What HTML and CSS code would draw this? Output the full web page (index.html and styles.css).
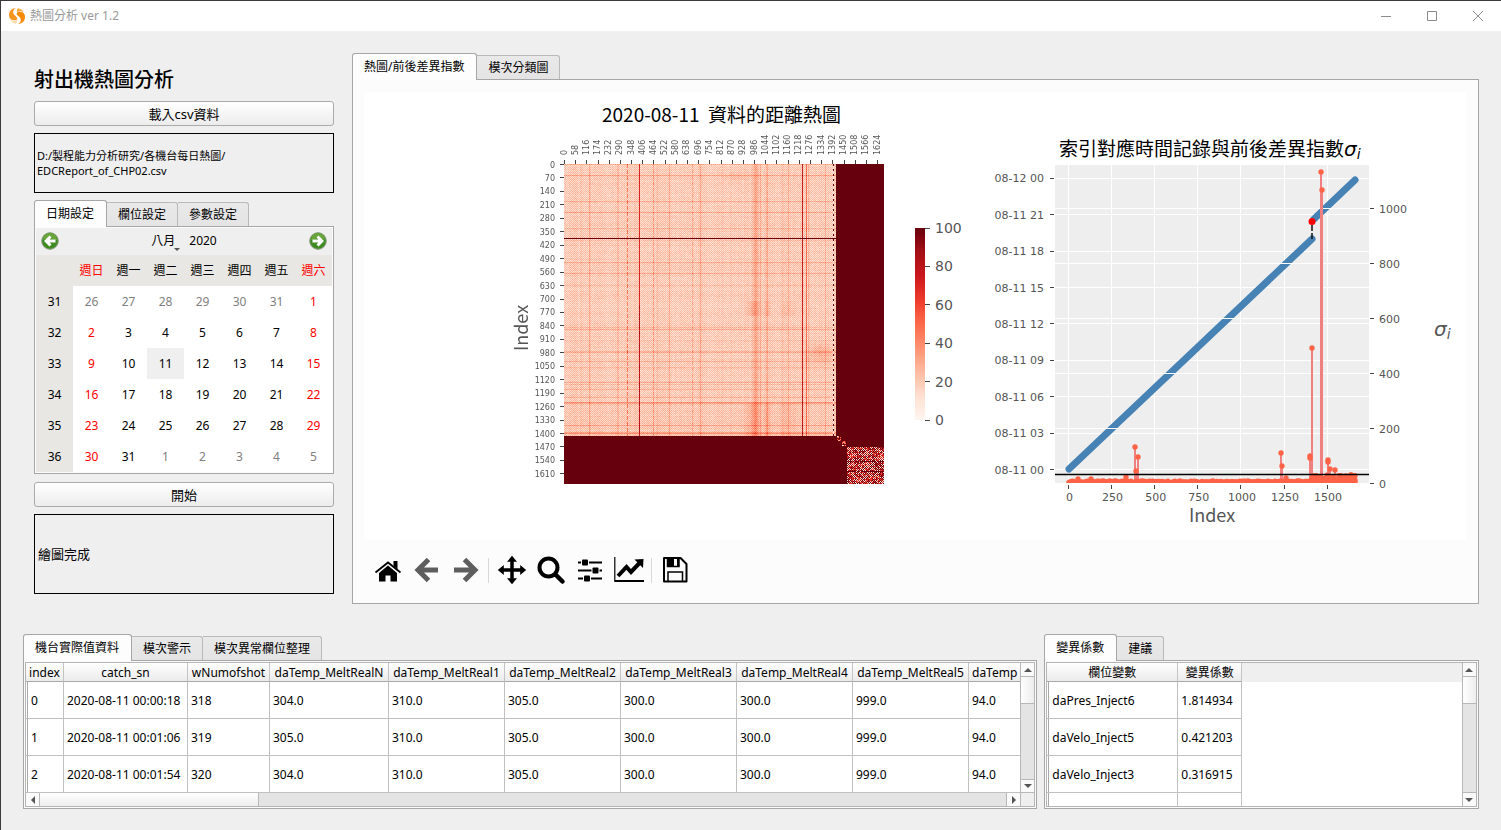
FILE: index.html
```html
<!DOCTYPE html>
<html lang="zh-Hant">
<head>
<meta charset="utf-8">
<meta name="viewport" content="width=device-width, initial-scale=1">
<title>熱圖分析 ver 1.2</title>
<link rel="stylesheet" href="styles.css">
</head>
<body>
<header class="titlebar">
  <svg class="logo" viewBox="0 0 18 18" aria-hidden="true">
    <path d="M8 1C4 1 1 4 1 8c0 1.500.6 3 1.600 4.200C5 13.500 8.500 13.600 9.300 11.900 10 9.800 5.500 8.500 5.200 5.500 5 3.500 6.200 1.900 8 1z" fill="#f7941e"/>
    <path d="M10 17c4 0 7-3 7-7 0-1.500-.6-3-1.600-4.200C13 4.500 9.500 4.400 8.700 6.200 8 8.200 12.500 9.500 12.800 12.500 13 14.500 11.800 16.100 10 17z" fill="#f58a07"/>
    <path d="M10 1.200c2.400.2 4.600 1.700 5.700 3.700-2-1-4.700-.8-6.500.2C8.400 3.800 8.800 2.200 10 1.200z" fill="#f9ab40"/>
    <path d="M8 16.800c-2.400-.2-4.600-1.700-5.700-3.700 2 1 4.700.9 6.500 0C9.600 14.200 9.200 15.800 8 16.800z" fill="#fcdcae"/>
  </svg>
  <span class="titlebar-text">熱圖分析 ver 1.2</span>
  <div class="window-buttons">
    <button type="button" aria-label="最小化"><svg viewBox="0 0 12 12"><path d="M1 6.500h10"/></svg></button>
    <button type="button" aria-label="最大化"><svg viewBox="0 0 12 12"><path d="M1.500 1.500h9v9h-9z"/></svg></button>
    <button type="button" aria-label="關閉"><svg viewBox="0 0 12 12"><path d="M1 1l10 10M11 1L1 11"/></svg></button>
  </div>
</header>

<main class="workspace">
  <div class="upper">
    <section class="controls">
      <h1>射出機熱圖分析</h1>
      <button type="button" class="push">載入csv資料</button>
      <p class="readout path">D:/製程能力分析研究/各機台每日熱圖/<br>EDCReport_of_CHP02.csv</p>
      <div class="tabbox">
        <div class="tabs" role="tablist">
          <button type="button" role="tab" class="tab on" aria-selected="true">日期設定</button>
          <button type="button" role="tab" class="tab">欄位設定</button>
          <button type="button" role="tab" class="tab">參數設定</button>
        </div>
        <div class="pane tight">
          <div class="cal-nav">
            <button type="button" aria-label="上個月"><svg viewBox="0 0 18 18"><circle cx="9" cy="9" r="8.300" fill="#3f8a22" stroke="#8a9a80"/><path d="M2 8a7 7 0 0 1 14 0Q9 5 2 8z" fill="#68a63c"/><path d="M3 9l5.500-5.500 2 2-1.900 1.900H14.500v3.200H8.600l1.900 1.900-2 2z" fill="#fff"/></svg></button>
            <span class="cal-title"><button type="button" class="month">八月</button><button type="button">2020</button></span>
            <button type="button" aria-label="下個月"><svg viewBox="0 0 18 18"><circle cx="9" cy="9" r="8.300" fill="#3f8a22" stroke="#8a9a80"/><path d="M2 8a7 7 0 0 1 14 0Q9 5 2 8z" fill="#68a63c"/><path d="M15 9L9.500 3.500l-2 2 1.900 1.900H3.500v3.200h5.900l-1.900 1.900 2 2z" fill="#fff"/></svg></button>
          </div>
          <table class="calendar">
            <thead><tr><th></th><th class="red">週日</th><th>週一</th><th>週二</th><th>週三</th><th>週四</th><th>週五</th><th class="red">週六</th></tr></thead>
            <tbody>
              <tr><th>31</th><td class="dim">26</td><td class="dim">27</td><td class="dim">28</td><td class="dim">29</td><td class="dim">30</td><td class="dim">31</td><td class="red">1</td></tr>
              <tr><th>32</th><td class="red">2</td><td>3</td><td>4</td><td>5</td><td>6</td><td>7</td><td class="red">8</td></tr>
              <tr><th>33</th><td class="red">9</td><td>10</td><td class="picked">11</td><td>12</td><td>13</td><td>14</td><td class="red">15</td></tr>
              <tr><th>34</th><td class="red">16</td><td>17</td><td>18</td><td>19</td><td>20</td><td>21</td><td class="red">22</td></tr>
              <tr><th>35</th><td class="red">23</td><td>24</td><td>25</td><td>26</td><td>27</td><td>28</td><td class="red">29</td></tr>
              <tr><th>36</th><td class="red">30</td><td>31</td><td class="dim">1</td><td class="dim">2</td><td class="dim">3</td><td class="dim">4</td><td class="dim">5</td></tr>
            </tbody>
          </table>
        </div>
      </div>
      <button type="button" class="push">開始</button>
      <p class="readout status">繪圖完成</p>
    </section>

    <section class="tabbox">
      <div class="tabs" role="tablist">
        <button type="button" role="tab" class="tab on" aria-selected="true">熱圖/前後差異指數</button>
        <button type="button" role="tab" class="tab">模次分類圖</button>
      </div>
      <div class="pane plot-pane">
        <svg class="figure" viewBox="364 92 1102 448" role="img" aria-label="距離熱圖與差異指數">
          <defs>
            <linearGradient id="reds" x1="0" y1="1" x2="0" y2="0">
              <stop offset="0" stop-color="#fff5f0"/><stop offset=".125" stop-color="#fee0d2"/><stop offset=".25" stop-color="#fcbba1"/><stop offset=".375" stop-color="#fc9272"/><stop offset=".5" stop-color="#fb6a4a"/><stop offset=".625" stop-color="#ef3b2c"/><stop offset=".75" stop-color="#cb181d"/><stop offset=".875" stop-color="#a50f15"/><stop offset="1" stop-color="#67000d"/>
            </linearGradient>
            <clipPath id="axes"><rect x="1055" y="165" width="314" height="318"/></clipPath>
          </defs>
          <text class="chart-title" x="602" y="122">2020-08-11  資料的距離熱圖</text>
          <foreignObject x="564" y="164" width="320" height="320"><canvas id="heat" width="320" height="320"></canvas></foreignObject>
          <g id="heat-ticks" class="tick-small"></g>
          <text class="axis-name" text-anchor="middle" transform="translate(528 328) rotate(-90)">Index</text>
          <rect x="915" y="228" width="10" height="192" fill="url(#reds)"/>
          <g id="bar-ticks" class="tick-large"></g>

          <text class="chart-title" x="1059" y="156">索引對應時間記錄與前後差異指數<tspan class="sigma big">σ</tspan><tspan class="sigma sub" dy="3">i</tspan></text>
          <rect x="1055" y="165" width="314" height="318" fill="#eee"/>
          <g id="grid-a" class="grid"></g>
          <g clip-path="url(#axes)">
            <path class="series" d="M1069 469L1312 239M1314 219L1355 180"/>
            <path d="M1312 239V222" stroke="#111" stroke-width="1.500" stroke-dasharray="6 2"/>
            <circle cx="1312" cy="221.500" r="3.500" fill="red"/>
          </g>
          <g id="grid-b" class="grid"></g>
          <g id="stems" clip-path="url(#axes)"></g>
          <path d="M1055 474.500h314" stroke="#000" stroke-width="1.500"/>
          <g id="plot-ticks" class="tick-mid"></g>
          <text class="axis-name" text-anchor="middle" x="1212" y="522">Index</text>
          <text class="axis-name" x="1434" y="336"><tspan class="sigma big">σ</tspan><tspan class="sigma sub" dy="3">i</tspan></text>
        </svg>
        <div class="toolbar" role="toolbar">
          <button type="button" aria-label="Home"><svg viewBox="0 0 30 30"><path d="M2.500 17.500L15 7.500 27.500 17.500" fill="none" stroke="#000" stroke-width="1.800"/><path d="M20.500 6h4v8.500l-4-3.500z"/><path d="M15 10.500l9 7.500v8.500h-6.500v-6h-5v6H6V18z"/></svg></button>
          <button type="button" aria-label="Back"><svg viewBox="0 0 30 30"><path d="M16.500 4.500L6 15l10.500 10.500M7 15h19" fill="none" stroke="#5e5e5e" stroke-width="5"/></svg></button>
          <button type="button" aria-label="Forward"><svg viewBox="0 0 30 30"><path d="M13.500 4.500L24 15 13.500 25.500M23 15H3" fill="none" stroke="#5e5e5e" stroke-width="5"/></svg></button>
          <span class="rule"></span>
          <button type="button" aria-label="Pan"><svg viewBox="0 0 30 30"><path d="M15 4v22M4 15h22" stroke="#000" stroke-width="3.500"/><path d="M15 .8l5 6H10zM15 29.200l5-6H10zM.8 15l6-5v10zM29.200 15l-6-5v10z"/></svg></button>
          <button type="button" aria-label="Zoom"><svg viewBox="0 0 30 30"><circle cx="12.500" cy="12.500" r="9" fill="none" stroke="#000" stroke-width="4"/><path d="M19.500 19.500l7 7" stroke="#000" stroke-width="4.500" stroke-linecap="round"/></svg></button>
          <button type="button" aria-label="Subplots"><svg viewBox="0 0 30 30"><path d="M3 7.500h24M3 15.500h24M3 23.500h24" stroke="#000" stroke-width="2"/><path d="M6 7.500h8M16.500 15.500h8M8 23.500h8" stroke="#fcfcfc" stroke-width="6"/><rect x="7" y="4.500" width="6" height="6" rx="1"/><rect x="17.500" y="12.500" width="6" height="6" rx="1"/><rect x="9" y="20.500" width="6" height="6" rx="1"/></svg></button>
          <button type="button" aria-label="Edit axis"><svg viewBox="0 0 30 30"><path d="M.8 2v24.500" stroke="#000" stroke-width="1.200"/><path d="M.5 26H30" stroke="#000" stroke-width="2"/><path d="M4 21l8.500-9 4.500 5L26 7.500" fill="none" stroke="#000" stroke-width="4"/><path d="M20.500 4.500l9-.5-.5 9z"/></svg></button>
          <span class="rule"></span>
          <button type="button" aria-label="Save"><svg viewBox="0 0 30 30"><path d="M4 3h16.500L26.500 9v17.500H4z" fill="none" stroke="#000" stroke-width="2" stroke-linejoin="round"/><path d="M7.500 3v8.500h11.500V3" fill="none" stroke="#000" stroke-width="1.500"/><path d="M8 3h6v8H8zM17 3h2v8h-2z"/><path d="M8 26v-9h14.500v9" fill="none" stroke="#000" stroke-width="1.500"/></svg></button>
        </div>
      </div>
    </section>
  </div>

  <div class="lower">
    <section class="tabbox">
      <div class="tabs" role="tablist">
        <button type="button" role="tab" class="tab on" aria-selected="true">機台實際值資料</button>
        <button type="button" role="tab" class="tab">模次警示</button>
        <button type="button" role="tab" class="tab">模次異常欄位整理</button>
      </div>
      <div class="pane tight">
        <div class="sheet both">
          <div class="view">
            <table class="data wide">
              <colgroup><col class="c-index"><col class="c-time"><col class="c-shot"><col class="c-first"><col span="6"></colgroup>
              <thead><tr><th>index</th><th>catch_sn</th><th>wNumofshot</th><th>daTemp_MeltRealN</th><th>daTemp_MeltReal1</th><th>daTemp_MeltReal2</th><th>daTemp_MeltReal3</th><th>daTemp_MeltReal4</th><th>daTemp_MeltReal5</th><th class="start">daTemp</th></tr></thead>
              <tbody>
                <tr><td>0</td><td>2020-08-11 00:00:18</td><td>318</td><td>304.0</td><td>310.0</td><td>305.0</td><td>300.0</td><td>300.0</td><td>999.0</td><td>94.0</td></tr>
                <tr><td>1</td><td>2020-08-11 00:01:06</td><td>319</td><td>305.0</td><td>310.0</td><td>305.0</td><td>300.0</td><td>300.0</td><td>999.0</td><td>94.0</td></tr>
                <tr><td>2</td><td>2020-08-11 00:01:54</td><td>320</td><td>304.0</td><td>310.0</td><td>305.0</td><td>300.0</td><td>300.0</td><td>999.0</td><td>94.0</td></tr>
              </tbody>
            </table>
          </div>
          <div class="vbar"><button type="button" aria-label="向上"><i class="up"></i></button><span class="thumb"></span><button type="button" aria-label="向下"><i class="down"></i></button></div>
          <div class="hbar"><button type="button" aria-label="向左"><i class="left"></i></button><span class="thumb"></span><button type="button" aria-label="向右"><i class="right"></i></button></div>
          <div class="corner"></div>
        </div>
      </div>
    </section>
    <section class="tabbox">
      <div class="tabs" role="tablist">
        <button type="button" role="tab" class="tab on" aria-selected="true">變異係數</button>
        <button type="button" role="tab" class="tab">建議</button>
      </div>
      <div class="pane tight">
        <div class="sheet">
          <div class="view tall">
            <table class="data">
              <colgroup><col class="c-name"><col class="c-value"></colgroup>
              <thead><tr><th>欄位變數</th><th>變異係數</th></tr></thead>
              <tbody>
                <tr><td>daPres_Inject6</td><td>1.814934</td></tr>
                <tr><td>daVelo_Inject5</td><td>0.421203</td></tr>
                <tr><td>daVelo_Inject3</td><td>0.316915</td></tr>
                <tr><td></td><td></td></tr>
              </tbody>
            </table>
          </div>
          <div class="vbar"><button type="button" aria-label="向上"><i class="up"></i></button><span class="thumb"></span><button type="button" aria-label="向下"><i class="down"></i></button></div>
        </div>
      </div>
    </section>
  </div>
</main>
<script src="charts.js"></script>
</body>
</html>
```
FILE: styles.css
```css
* { box-sizing: border-box; }

body {
  margin: 0;
  min-height: 100vh;
  background: #efefef;
  border-top: 1px solid #3a3a3c;
  border-left: 1px solid #3a3a3c;
  color: #000;
  font: 12px/16px "Noto Sans", "Noto Sans CJK TC", sans-serif;
}

button {
  margin: 0;
  padding: 0;
  border: 0;
  background: none;
  color: inherit;
  font: inherit;
}

/* title bar */
.titlebar {
  display: flex;
  align-items: center;
  height: 30px;
  padding-left: 7px;
  background: #fff;
  color: #999;
}
.logo { width: 18px; height: 18px; }
.titlebar-text { margin-left: 4px; }
.window-buttons { display: flex; margin-left: auto; }
.window-buttons button { display: grid; place-items: center; width: 46px; height: 30px; }
.window-buttons svg { width: 12px; height: 12px; fill: none; stroke: #8c8c8c; }

/* page areas */
.workspace { padding: 22px; }
.upper {
  display: grid;
  grid-template-columns: 300px minmax(0, 1fr);
  gap: 18px;
  padding-left: 11px;
}
.lower {
  display: grid;
  grid-template-columns: minmax(0, 7fr) minmax(0, 3fr);
  gap: 7px;
  margin-top: 30px;
}
.controls { display: flex; flex-direction: column; gap: 7px; padding-top: 12px; }
.controls .tabbox { padding-bottom: 1px; }
h1 { margin: 0; font-size: 20px; line-height: 29px; font-weight: 500; }

.push {
  height: 25px;
  border: 1px solid #ababab;
  border-radius: 3px;
  background: linear-gradient(#fff, #ececec);
  font-size: 13px;
}
.readout {
  display: flex;
  align-items: center;
  margin: 0;
  padding: 0 2px;
  border: 1px solid #000;
}
.path { height: 60px; font-size: 11px; line-height: 15px; }
.status { height: 80px; padding: 0 3px; font-size: 13px; }

/* tabs */
.tabs { display: flex; align-items: flex-end; height: 26px; }
.tab {
  height: 24px;
  padding: 0 11px;
  border: 1px solid #b9b9b9;
  border-left: 0;
  border-bottom: 0;
  border-radius: 0 3px 0 0;
  background: linear-gradient(#e9e9e9, #e4e4e4);
  white-space: nowrap;
}
.tab.on {
  position: relative;
  height: 27px;
  margin-bottom: -1px;
  padding: 0 12px 1px 11px;
  border: 1px solid #a6a6a6;
  border-bottom: 0;
  border-radius: 3px 3px 0 0;
  background: #fdfdfd;
}
.pane { border: 1px solid #a6a6a6; background: #fcfcfc; }
.pane.tight { padding: 1px; }
.plot-pane { padding: 12px 12px 3px 11px; }

/* calendar */
.cal-nav {
  display: flex;
  align-items: center;
  justify-content: space-between;
  height: 27px;
  padding: 0 5px 1px;
  background: #efefef;
}
.cal-nav svg { display: block; width: 18px; height: 18px; }
.cal-title { display: flex; gap: 14px; }
.month { position: relative; }
.month::after {
  content: "";
  position: absolute;
  right: -5px;
  bottom: -2px;
  border: 3px solid transparent;
  border-top-color: #555;
  border-bottom: 0;
}
.calendar {
  width: 100%;
  border-collapse: collapse;
  table-layout: fixed;
  background: #fff;
  text-align: center;
}
.calendar th, .calendar td { height: 31px; padding: 0; font-weight: 400; }
.calendar th { background: #e8e7e3; }
.calendar .red { color: #f00; }
.calendar .dim { color: #808080; }
.calendar .picked { background: #efefef; }

/* figure */
.figure { display: block; width: 100%; height: auto; background: #fff; }
#heat { display: block; image-rendering: pixelated; }
.chart-title { font: 19px "Noto Sans CJK TC", sans-serif; white-space: pre; }
.axis-name { font: 18px "Noto Sans CJK TC", sans-serif; fill: #555; }
.sigma { font-family: "DejaVu Sans", sans-serif; font-style: oblique; }
.big { font-size: 20px; }
.sub { font-size: 14px; }
.tick-small { font: 8px "DejaVu Sans", sans-serif; fill: #555; }
.tick-mid { font: 11px "DejaVu Sans", sans-serif; fill: #555; }
.tick-large { font: 14px "DejaVu Sans", sans-serif; fill: #555; }
.tick { stroke: #444; shape-rendering: crispEdges; }
.grid { stroke: #fff; shape-rendering: crispEdges; }
.series { fill: none; stroke: #4682b4; stroke-width: 7; stroke-linecap: round; }

.toolbar { display: flex; align-items: center; height: 60px; padding-left: 4px; }
.toolbar button { display: grid; place-items: center; width: 39px; height: 39px; }
.toolbar svg { width: 30px; height: 30px; }
.rule { width: 1px; height: 25px; margin: 0 3px; background: #d8d8d8; }

/* data sheets */
.sheet {
  display: grid;
  grid-template-columns: minmax(0, 1fr) 14px;
  border: 1px solid #b4b4b4;
  background: #fff;
}
.view { height: 130px; overflow: hidden; background: linear-gradient(#efefef 19px, #fff 19px); }
.view.tall { height: 143px; }
.data { border-collapse: separate; border-spacing: 0; table-layout: fixed; width: 195px; }
.data.wide { width: 1059px; }
.c-index { width: 38px; }
.c-time { width: 124px; }
.c-shot { width: 82px; }
.c-first { width: 119px; }
.c-name { width: 131px; }
.c-value { width: 64px; }
.data th {
  height: 19px;
  padding: 1px 0 0;
  border-right: 1px solid #c4c4c4;
  border-bottom: 1px solid #a8a8a8;
  background: linear-gradient(#fff, #ebebeb);
  font-weight: 400;
  line-height: 17px;
  white-space: nowrap;
}
.data th.start { padding-left: 3px; text-align: left; }
.data td {
  height: 37px;
  padding: 2px 3px 0;
  border-right: 1px solid #c0c0c0;
  border-bottom: 1px solid #c0c0c0;
  background: #fff;
  white-space: nowrap;
}
.data td:first-child {
  padding-left: 5px;
  background: linear-gradient(90deg, #fff 1px, #a8a8a8 1px, #a8a8a8 2px, #fff 2px);
}

.vbar, .hbar { display: flex; background: #e4e4e4; }
.vbar { flex-direction: column; border-left: 1px solid #b8b8b8; }
.hbar { height: 13px; }
.vbar button, .hbar button { display: grid; place-items: center; background: #fafafa; }
.vbar button { height: 14px; border-bottom: 1px solid #b8b8b8; }
.vbar button:last-child { margin-top: auto; border-top: 1px solid #b8b8b8; border-bottom: 0; }
.both .vbar button:last-child { border-bottom: 1px solid #b8b8b8; }
.vbar .thumb { height: 27px; border-bottom: 1px solid #b8b8b8; background: linear-gradient(90deg, #fff, #ededed); }
.hbar button { width: 14px; border-right: 1px solid #b8b8b8; }
.hbar button:last-child { margin-left: auto; border-left: 1px solid #b8b8b8; border-right: 0; }
.hbar .thumb { width: 22%; border-right: 1px solid #b8b8b8; background: linear-gradient(#fff, #ededed); }
.corner { border-left: 1px solid #b8b8b8; background: #efefef; }

.up, .down, .left, .right { display: block; border: 4px solid transparent; }
.up { border-bottom-color: #555; border-top: 0; }
.down { border-top-color: #555; border-bottom: 0; }
.left { border-right-color: #555; border-left: 0; }
.right { border-left-color: #555; border-right: 0; }
```
FILE: charts.js
```javascript
const NS = "http://www.w3.org/2000/svg";

function add(parent, name, attrs, text) {
  const node = document.createElementNS(NS, name);
  for (const key in attrs) node.setAttribute(key, attrs[key]);
  if (text !== undefined) node.textContent = text;
  document.getElementById(parent).appendChild(node);
}

let seed = 20200811;
function rand() {
  seed = (seed * 1664525 + 1013904223) >>> 0;
  return seed / 4294967296;
}

// Sequential red colour scale
const REDS = [[255,245,240],[254,224,210],[252,187,161],[252,146,114],[251,106,74],[239,59,44],[203,24,29],[165,15,21],[103,0,13]];
function reds(v) {
  const t = Math.max(0, Math.min(1, v)) * 8;
  const i = Math.min(7, Math.floor(t));
  return REDS[i].map((c, k) => c + (REDS[i + 1][k] - c) * (t - i));
}

// Extra distance per column and per row of the heatmap
const cols = {16:.05, 25:.12, 26:.04, 53:.07, 54:.05, 89:.07, 93:.05, 105:.13, 128:.06, 136:.13, 196:.1, 202:.08, 203:.12, 218:.05, 224:.1, 238:.55, 242:.3, 244:.1, 261:.1};
const rows = {0:.1, 11:.13, 37:.12, 48:.12, 64:.09, 76:.05, 81:.05, 98:.12, 109:.12, 121:.05, 163:.09, 165:.1, 176:.05, 187:.09, 188:.09, 197:.09, 203:.05, 218:.1, 220:.06, 225:.09, 233:.12, 238:.2, 239:.08, 261:.12, 268:.1, 269:.16};
const softCol = Array.from({length: 320}, () => rand() * .04);
const softRow = Array.from({length: 320}, () => rand() * .04);
const bump = (v, centre, width) => Math.exp(-(((v - centre) / width) ** 2));

function distance(x, y) {
  if (x < 272 && y < 272) {
    if (y === 74) return 1;
    if (x === 75) return .66 + rand() * .08 + (y > 140 ? .2 * rand() : 0);
    if (x === 269) return y % 5 < 2 ? 1 : .1;
    let v = ((x + y) % 2 ? .18 : .06) + rand() * .06 + softCol[x] + softRow[y];
    if (x === 63 && y % 6 < 4) v += .25;
    if ((x === 89 || x === 128) && y % 6 < 3) v += .1;
    v += (cols[x] || 0) + (rows[y] || 0);
    v += .13 * bump(x, 191, 2.5);
    if (y > 238 || y > 136 && y < 152) v += .08 * bump(x, 189, 7) + .06 * bump(x, 203, 3) + .04 * bump(x, 223, 8);
    v += .09 * bump(y, 189, 9) * bump(x, 257, 14);
    v += .04 * bump(y, 12, 5) * bump(x, 172, 12);
    if (y > 238) v += .02;
    return v;
  }
  if (x >= 283 && y >= 283) {
    if ((y === 297 || y === 307) && rand() < .8) return 1;
    const r = rand();
    if ((x + y) % 2) return r < .55 ? .05 + r * .3 : .5 + rand() * .4;
    return r < .6 ? 1 : .6 + rand() * .3;
  }
  if (x > 272 && x < 277 && y > 271 && y < 277) return rand() * 1.2;
  if (x > 277 && x < 282 && y > 276 && y < 282) return rand() * 1.2;
  return 1;
}

const ctx = document.getElementById("heat").getContext("2d");
const image = ctx.createImageData(320, 320);
for (let y = 0; y < 320; y++) {
  for (let x = 0; x < 320; x++) {
    const [r, g, b] = reds(distance(x, y));
    image.data.set([r, g, b, 255], (y * 320 + x) * 4);
  }
}
ctx.putImageData(image, 0, 0);

// Heatmap axes
for (let i = 0; i <= 23; i++) {
  const y = 164.5 + i * 13.45;
  add("heat-ticks", "path", {class: "tick", d: `M560 ${y}h4`});
  add("heat-ticks", "text", {x: 555, y: y + 3, "text-anchor": "end"}, i * 70);
}
for (let i = 0; i <= 28; i++) {
  const x = 564.5 + i * 11.18;
  add("heat-ticks", "path", {class: "tick", d: `M${x} 160v4`});
  add("heat-ticks", "text", {transform: `translate(${x + 2} 155) rotate(-90)`}, i * 58);
}
for (let i = 0; i <= 5; i++) {
  const y = 420 - i * 38.4;
  add("bar-ticks", "path", {class: "tick", d: `M925 ${y}h5`});
  add("bar-ticks", "text", {x: 935, y: y + 5}, i * 20);
}

// Time and index axes
["00", "03", "06", "09", "12", "15", "18", "21", "00"].forEach((hour, i) => {
  const y = 469.5 - i * 36.4;
  add("grid-a", "path", {d: `M1055 ${y}h314`});
  add("plot-ticks", "path", {class: "tick", d: `M1050 ${y}h4`});
  add("plot-ticks", "text", {x: 1044, y: y + 4, "text-anchor": "end"}, `08-${i < 8 ? 11 : 12} ${hour}`);
});
for (let i = 0; i <= 6; i++) {
  const x = 1068.5 + i * 43.1;
  add("grid-a", "path", {d: `M${x} 165v318`});
  add("plot-ticks", "path", {class: "tick", d: `M${x} 485v4`});
  add("plot-ticks", "text", {x: x + 1, y: 501, "text-anchor": "middle"}, i * 250);
}
for (let i = 0; i <= 5; i++) {
  const y = 483.5 - i * 55;
  if (i) add("grid-b", "path", {d: `M1055 ${y}h314`});
  add("plot-ticks", "path", {class: "tick", d: `M1370 ${y}h4`});
  add("plot-ticks", "text", {x: 1379, y: y + 4}, i * 200);
}

// Difference index stems
const peaks = [[1135, 447], [1138, 457], [1136, 471], [1281, 453], [1282, 466], [1310, 456], [1310, 458], [1312, 348], [1321, 172], [1322, 190], [1328, 460], [1328, 462], [1330, 469], [1335, 470], [1351, 475], [1078, 479], [1091, 479], [1126, 477], [1286, 478]];
for (let x = 1069; x <= 1355; x += 1) {
  peaks.push([x, x < 1311 ? 483 - rand() * 2 : 483 - rand() * 8]);
  if (x > 1310) peaks.push([x, 482], [x, 478 + rand() * 3]);
}
for (const [x, y] of peaks) {
  add("stems", "path", {d: `M${x} 484V${y}`, stroke: "#f08080", "stroke-width": 2});
}
for (const [x, y] of peaks) {
  add("stems", "circle", {cx: x, cy: y, r: 2.7, fill: "#ff6347"});
}
```
